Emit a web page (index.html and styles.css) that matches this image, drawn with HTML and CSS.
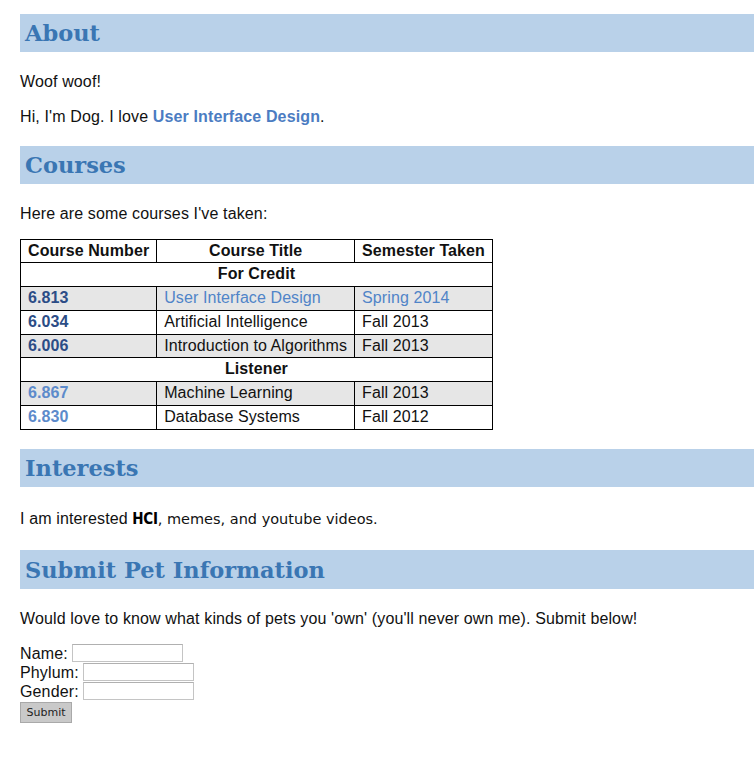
FILE: index.html
```html
<!DOCTYPE html>
<html>
<head>
<meta charset="utf-8">
<title>Dog</title>
<link rel="stylesheet" href="styles.css">
</head>
<body>
<div class="page">
  <h2 class="band">About</h2>
  <p>Woof woof!</p>
  <p>Hi, I'm Dog. I love <a class="bold-link" href="#">User Interface Design</a>.</p>

  <h2 class="band">Courses</h2>
  <p class="intro">Here are some courses I've taken:</p>
  <table class="courses">
    <tr>
      <th>Course Number</th>
      <th>Course Title</th>
      <th>Semester Taken</th>
    </tr>
    <tr><th colspan="3">For Credit</th></tr>
    <tr class="alt">
      <td><a class="num visited" href="#">6.813</a></td>
      <td class="hl">User Interface Design</td>
      <td class="hl">Spring 2014</td>
    </tr>
    <tr>
      <td><a class="num visited" href="#">6.034</a></td>
      <td>Artificial Intelligence</td>
      <td>Fall 2013</td>
    </tr>
    <tr class="alt">
      <td><a class="num visited" href="#">6.006</a></td>
      <td>Introduction to Algorithms</td>
      <td>Fall 2013</td>
    </tr>
    <tr><th colspan="3">Listener</th></tr>
    <tr class="alt">
      <td><a class="num" href="#">6.867</a></td>
      <td>Machine Learning</td>
      <td>Fall 2013</td>
    </tr>
    <tr>
      <td><a class="num" href="#">6.830</a></td>
      <td>Database Systems</td>
      <td>Fall 2012</td>
    </tr>
  </table>

  <h2 class="band">Interests</h2>
  <p class="interests">I am interested <span class="impact">HCI</span><span class="comic">, memes, and youtube videos.</span></p>

  <h2 class="band tall">Submit Pet Information</h2>
  <p class="ask">Would love to know what kinds of pets you 'own' (you'll never own me). Submit below!</p>
  <form class="pet-form">
    <div class="row">Name: <input type="text" class="field"></div>
    <div class="row">Phylum: <input type="text" class="field"></div>
    <div class="row">Gender: <input type="text" class="field"></div>
    <div class="row"><button type="button" class="submit">Submit</button></div>
  </form>
</div>
</body>
</html>
```

FILE: styles.css
```css
html, body {
  margin: 0;
  padding: 0;
  background: #ffffff;
}

body {
  font-family: "Liberation Sans", Arial, sans-serif;
  font-size: 16px;
  letter-spacing: 0.13px;
  color: #111111;
}

.page {
  padding: 14px 0 0 20px;
}

.band {
  margin: 19.5px 0 20px 0;
  padding: 0 0 0 5px;
  height: 38px;
  line-height: 39px;
  background: #b9d1e9;
  color: #3a76b3;
  font-family: "DejaVu Serif", Georgia, serif;
  font-weight: bold;
  font-size: 22.5px;
  letter-spacing: 0;
}

.band.tall {
  height: 39px;
  line-height: 40px;
}

.page > .band:first-child {
  margin-top: 0;
}

p {
  margin: 16px 0;
  line-height: 19px;
}

.band + p {
  margin-top: 19.5px;
}

a {
  text-decoration: none;
}

.bold-link {
  color: #4b7cc2;
  font-weight: bold;
}

.courses {
  border-collapse: collapse;
  border: 1px solid #000;
  margin-bottom: 0;
  letter-spacing: 0.09px;
}

.courses th,
.courses td {
  border: 1px solid #000;
  padding: 2px 7px;
  line-height: 18.75px;
  white-space: nowrap;
}

.courses th {
  text-align: center;
  font-weight: bold;
}

.courses td {
  text-align: left;
}

.courses tr.alt td {
  background: #e6e6e6;
}

.num {
  font-weight: bold;
  color: #5d8bcb;
}

.num.visited {
  color: #2c4d86;
}

.courses td.hl {
  color: #5084c8;
}

.courses + .band {
  margin-top: 19.5px;
}

.band + p.interests {
  margin-top: 22px;
  margin-bottom: 20.5px;
}

.impact {
  font-family: "DejaVu Sans Condensed", "DejaVu Sans", sans-serif;
  font-weight: bold;
  font-size: 15px;
  letter-spacing: -0.3px;
  color: #000;
}

.comic {
  font-family: "DejaVu Sans", sans-serif;
  font-size: 14.5px;
  letter-spacing: 0;
  color: #111;
}

.band + p.ask {
  margin-top: 20px;
  margin-bottom: 16px;
}

.pet-form {
  margin: 0;
}

.row {
  height: 19px;
  line-height: 19px;
  display: flex;
  align-items: center;
  gap: 4px;
}

.field {
  box-sizing: border-box;
  width: 111px;
  height: 18px;
  margin: 0;
  padding: 0 2px;
  border: 1px solid #c4c4c4;
  border-top-color: #b0b0b0;
  background: #fff;
  font-size: 13px;
}

.row:last-child {
  height: 21px;
  margin-top: 1px;
}

.submit {
  box-sizing: border-box;
  width: 52px;
  height: 21px;
  margin: 0;
  padding: 0;
  border: 1px solid #a9a9a9;
  background: #c9c9c9;
  color: #222;
  font-family: "DejaVu Sans", sans-serif;
  font-size: 11px;
  letter-spacing: 0;
  line-height: 19px;
}
```
